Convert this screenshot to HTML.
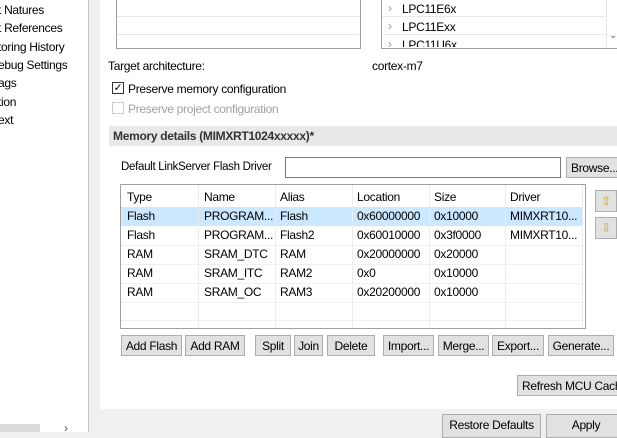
<html><head><style>
body{margin:0;width:617px;height:432px;overflow:hidden;background:#f0f0f0;font-family:"Liberation Sans",sans-serif;font-size:12px;letter-spacing:-0.3px;color:#000;position:relative}
.a{position:absolute;white-space:nowrap}
.btn{position:absolute;background:#e1e1e1;border:1px solid #adadad;height:21px;line-height:20px;text-align:center;box-sizing:border-box;font-size:12px;white-space:nowrap;overflow:hidden}
.tc{position:absolute;white-space:nowrap;font-size:12px}
</style></head><body>
<div class="a" style="left:0;top:0;width:88px;height:432px;background:#fff"></div>
<div class="a" style="left:88px;top:0;width:1px;height:432px;background:#c8c8c8"></div>
<div class="a" style="left:0;top:424px;width:40px;height:8px;background:#dcdcdc"></div>
<div class="a" style="left:64px;top:421px;color:#555">›</div>
<div class="a" style="left:-2px;top:3px">t Natures</div>
<div class="a" style="left:-2px;top:21px">t References</div>
<div class="a" style="left:-2px;top:40px">toring History</div>
<div class="a" style="left:-2px;top:58px">ebug Settings</div>
<div class="a" style="left:-2px;top:76px">ags</div>
<div class="a" style="left:-2px;top:95px">tion</div>
<div class="a" style="left:-2px;top:113px">ext</div>

<div class="a" style="left:100px;top:0;width:517px;height:409px;background:#fff"></div>
<div class="a" style="left:116px;top:-2px;width:243px;height:49px;border:1px solid #a0a0a0;background:#fff"></div>
<div class="a" style="left:117px;top:16px;width:242px;height:1px;background:#e8e8e8"></div>
<div class="a" style="left:117px;top:34px;width:242px;height:1px;background:#e8e8e8"></div>
<div class="a" style="left:381px;top:-2px;width:236px;height:49px;border:1px solid #a0a0a0;background:#fff;overflow:hidden"></div>
<div class="a" style="left:382px;top:16px;width:224px;height:1px;background:#e8e8e8"></div>
<div class="a" style="left:382px;top:34px;width:224px;height:1px;background:#e8e8e8"></div>
<div class="a" style="left:606px;top:-2px;width:1px;height:49px;background:#e8e8e8"></div>
<div class="a" style="left:388px;top:1px;color:#999">›</div><div class="a" style="left:402px;top:2px">LPC11E6x</div>
<div class="a" style="left:388px;top:19px;color:#999">›</div><div class="a" style="left:402px;top:20px">LPC11Exx</div>
<div class="a" style="left:381px;top:36px;width:225px;height:11px;overflow:hidden"><span class="a" style="left:7px;top:1px;color:#999">›</span><span class="a" style="left:21px;top:2px">LPC11U6x</span></div>
<div class="a" style="left:609px;top:30px;color:#666;font-size:10px">⌄</div>

<div class="a" style="left:108px;top:59px">Target architecture:</div>
<div class="a" style="left:372px;top:59px">cortex-m7</div>
<div class="a" style="left:112px;top:82px;width:12px;height:12px;border:1px solid #333;box-sizing:border-box;font-size:11px;line-height:10px;text-align:center">✓</div>
<div class="a" style="left:128px;top:82px">Preserve memory configuration</div>
<div class="a" style="left:112px;top:102px;width:12px;height:12px;border:1px solid #ccc;box-sizing:border-box"></div>
<div class="a" style="left:128px;top:102px;color:#a0a0a0">Preserve project configuration</div>
<div class="a" style="left:109px;top:126px;width:508px;height:20px;background:#e8e8e8"></div>
<div class="a" style="left:113px;top:129px;font-weight:bold;color:#333">Memory details (MIMXRT1024xxxxx)*</div>

<div class="a" style="left:121px;top:161px;font-size:11.5px">Default LinkServer Flash Driver</div>
<div class="a" style="left:285px;top:157px;width:276px;height:21px;border:1px solid #7a7a7a;box-sizing:border-box;background:#fff"></div>
<div class="btn" style="left:566px;top:157px;width:56px;text-align:left;padding-left:4px">Browse...</div>

<div class="a" style="left:120px;top:184px;width:466px;height:145px;border:1px solid #a0a0a0;box-sizing:border-box;background:#fff"></div>
<div class="a" style="left:121px;top:207px;width:462px;height:19px;background:#cce8ff"></div>
<div class="a" style="left:121px;top:245px;width:462px;height:1px;background:#f0f0f0"></div>
<div class="a" style="left:121px;top:264px;width:462px;height:1px;background:#f0f0f0"></div>
<div class="a" style="left:121px;top:283px;width:462px;height:1px;background:#f0f0f0"></div>
<div class="a" style="left:121px;top:302px;width:462px;height:1px;background:#f0f0f0"></div>
<div class="a" style="left:121px;top:320px;width:462px;height:1px;background:#f0f0f0"></div>
<div class="a" style="left:198px;top:185px;width:1px;height:143px;background:#ececec"></div>
<div class="a" style="left:275px;top:185px;width:1px;height:143px;background:#ececec"></div>
<div class="a" style="left:352px;top:185px;width:1px;height:143px;background:#ececec"></div>
<div class="a" style="left:429px;top:185px;width:1px;height:143px;background:#ececec"></div>
<div class="a" style="left:505px;top:185px;width:1px;height:143px;background:#ececec"></div>
<div class="a" style="left:582px;top:185px;width:1px;height:143px;background:#ececec"></div>
<div class="tc" style="left:127px;top:190px">Type</div><div class="tc" style="left:204px;top:190px">Name</div><div class="tc" style="left:280px;top:190px">Alias</div><div class="tc" style="left:357px;top:190px">Location</div><div class="tc" style="left:434px;top:190px">Size</div><div class="tc" style="left:510px;top:190px">Driver</div>
<div class="tc" style="left:127px;top:209px">Flash</div><div class="tc" style="left:204px;top:209px">PROGRAM...</div><div class="tc" style="left:280px;top:209px">Flash</div><div class="tc" style="left:357px;top:209px">0x60000000</div><div class="tc" style="left:434px;top:209px">0x10000</div><div class="tc" style="left:510px;top:209px">MIMXRT10...</div>
<div class="tc" style="left:127px;top:228px">Flash</div><div class="tc" style="left:204px;top:228px">PROGRAM...</div><div class="tc" style="left:280px;top:228px">Flash2</div><div class="tc" style="left:357px;top:228px">0x60010000</div><div class="tc" style="left:434px;top:228px">0x3f0000</div><div class="tc" style="left:510px;top:228px">MIMXRT10...</div>
<div class="tc" style="left:127px;top:247px">RAM</div><div class="tc" style="left:204px;top:247px">SRAM_DTC</div><div class="tc" style="left:280px;top:247px">RAM</div><div class="tc" style="left:357px;top:247px">0x20000000</div><div class="tc" style="left:434px;top:247px">0x20000</div>
<div class="tc" style="left:127px;top:266px">RAM</div><div class="tc" style="left:204px;top:266px">SRAM_ITC</div><div class="tc" style="left:280px;top:266px">RAM2</div><div class="tc" style="left:357px;top:266px">0x0</div><div class="tc" style="left:434px;top:266px">0x10000</div>
<div class="tc" style="left:127px;top:285px">RAM</div><div class="tc" style="left:204px;top:285px">SRAM_OC</div><div class="tc" style="left:280px;top:285px">RAM3</div><div class="tc" style="left:357px;top:285px">0x20200000</div><div class="tc" style="left:434px;top:285px">0x10000</div>

<div class="btn" style="left:595px;top:190px;width:22px;height:22px;color:#e0a000;line-height:20px">⇧</div>
<div class="btn" style="left:595px;top:217px;width:22px;height:22px;color:#e0a000;line-height:20px">⇩</div>

<div class="btn" style="left:121px;top:335px;width:61px">Add Flash</div>
<div class="btn" style="left:185px;top:335px;width:60px">Add RAM</div>
<div class="btn" style="left:255px;top:335px;width:36px">Split</div>
<div class="btn" style="left:294px;top:335px;width:29px">Join</div>
<div class="btn" style="left:327px;top:335px;width:48px">Delete</div>
<div class="btn" style="left:383px;top:335px;width:51px">Import...</div>
<div class="btn" style="left:438px;top:335px;width:51px">Merge...</div>
<div class="btn" style="left:492px;top:335px;width:52px">Export...</div>
<div class="btn" style="left:548px;top:335px;width:66px">Generate...</div>
<div class="btn" style="left:517px;top:375px;width:110px;text-align:left;padding-left:4px">Refresh MCU Cache</div>
<div class="btn" style="left:442px;top:414px;width:99px;height:24px">Restore Defaults</div>
<div class="btn" style="left:546px;top:414px;width:80px;height:24px">Apply</div>
</body></html>
